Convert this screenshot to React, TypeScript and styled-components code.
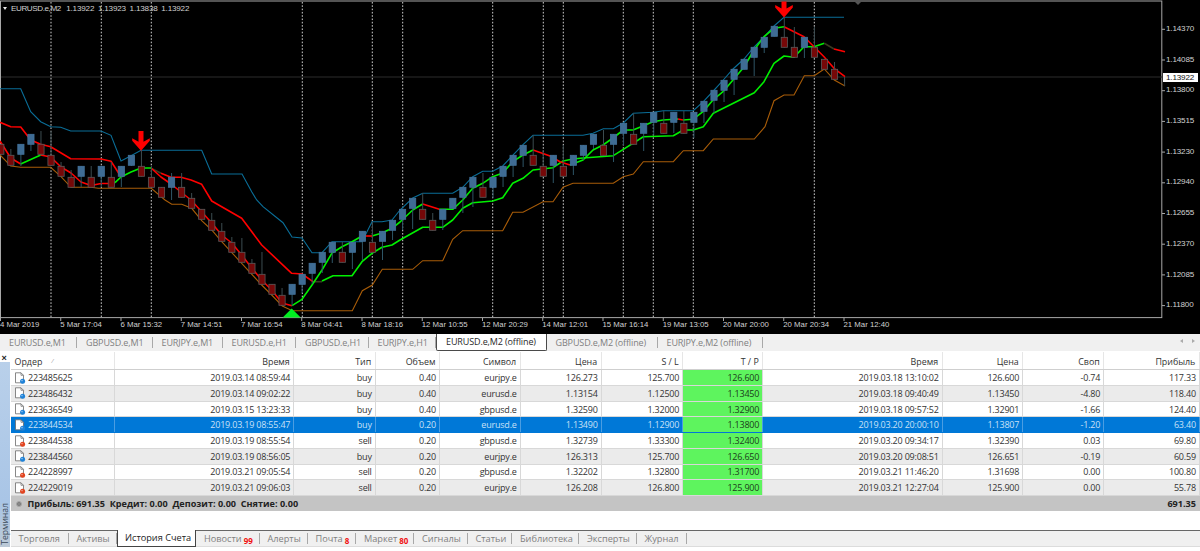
import React from "react";
import styled, { createGlobalStyle } from "styled-components";

const Global = createGlobalStyle`
  html, body { margin: 0; padding: 0; background: #fff; }
  #root { width: 1200px; height: 551px; overflow: hidden; }
  * { box-sizing: border-box; }
`;

const UI_FONT = `"Open Sans", "Noto Sans", sans-serif`;
const CHART_FONT = `"Liberation Sans", Arial, sans-serif`;

/* ---------- chart data ---------- */
type C = [number, 0 | 1, number?, number?];
const candles: C[] = [
  [144,0],[155,0,149],[144,1,,166],[134,1,,151],[144,0,131],[155,0,131],[166,0,162],[177,0,170],[166,1,,187],[177,0,166],
  [166,1,,187],[177,0,162],[166,1,,187],[155,1,,166],[166,0,150],[177,0,166],[187,0],[177,1,173,200],[187,0,173],[198,0,193],
  [209,0],[220,0,213],[231,0,223],[242,0,237],[252,0,238],[263,0,259],[274,0,252],[284,0],[295,0,288],[284,1,,306],
  [274,1,,293],[263,1,,284],[252,1,,273],[242,1,,263],[252,0,242],[242,1,,269],[231,1,,260],[242,0,222],[231,1,,260],[220,1,,240],
  [209,1,,230],[198,1,,229],[209,0,193],[220,0,213],[209,1,,230],[198,1],[187,1,,213],[177,1,,207],[187,0,173],[177,1,,198],
  [166,1,,187],[155,1,,177],[145,1,,167],[155,0,135],[166,0,150],[155,1,,183],[166,0,145],[155,1,,175],[145,1,,160],[134,1,,149],
  [145,0,130],[134,1,,162],[123,1,,145],[134,0,113],[123,1,,151],[112,1,,135],[123,0,111],[112,1,,133],[123,0,111],[112,1,,138],
  [101,1,,123],[90,1,,113],[80,1,,102],[69,1,,95],[59,1],[47,1,,76],[37,1,,53],[26,1],[37,0,17],[47,0,27],
  [37,1,,58],[47,0,27],[59,0],[69,0,62],
];
const cx = (i: number) => 0.8 + 10.045 * i;

const blueLine = "0,88.7 20.7,88.7 30.7,111.7 40.7,121.7 50.7,126.7 60.7,127.3 70.7,131 101,131 111,135.3 121,161 131,155.7 141,150.3 201.7,150.3 211.7,174 242,174 251.7,191.7 256.7,200 263,206.7 283,222.7 292,237 302,238 312,252.7 322,252.7 332,241.7 362,241.7 372,221.7 382,221.7 392,220 400,210 412.7,198 422.7,193.3 452.7,193.3 462.7,187.3 472.7,176.7 482.7,171.3 492.7,171.3 502.7,166 512.7,155.3 523,144.7 533,135.3 583,135.3 593,133.3 603.3,128.7 613.3,128.7 623.3,123 633.3,113.3 653.3,112.3 663.3,110.7 693.3,110.7 703.3,101.7 713.3,91 723.3,80 733,69 744,59 754,47 764,37 774,26 784,17.3 844,17.3";
const brownLine = "0,155 10.7,166 20.7,167.3 50.7,167.3 61,176.7 71,187.3 91,187.3 98.3,188.3 151.3,188.3 165,200 171.7,204.3 181.7,204.3 191.7,208.3 201.7,220.7 211.7,230 221.7,241.7 241.7,263.3 261.7,285 271.7,295 282.3,306 292.3,310.7 352.3,310.7 362.3,290.7 372.3,285 382.3,269.3 412.7,269.3 422.7,260.7 442.7,260.7 452.7,239.3 462.7,230.7 502.7,230.7 512.7,212.3 523,212.3 543,201.7 553,201.7 563,187.3 573,183.3 613.3,183.3 623.3,176.7 633.3,174 643.3,161.7 673.3,161.7 683.3,150.7 703.3,150.7 713.3,139 754.3,139 765,126.7 774,100.7 784,95 794,95 804.3,75.7 814.3,75.7 824.3,69 834.3,80 845,86";
const colored: [string, string][] = [
  ["#ff0000", "0,122.3 10.7,126.7 20.7,127 30.7,140 40.7,144.3 50.7,146.7 60.7,152.7 70.7,158.7 101,159 111,161.3 121,176.7"],
  ["#ff0000", "161,173.3 171,177.3 181,177.3 191,180 201.7,184.3 211.7,201 241.7,218.3 261.7,245 291.7,273.3 302,274 313,281.7"],
  ["#3a3a20", "151,168.3 161,173.3"],
  ["#3a3a20", "313,281.7 322,281.7"],
  ["#00f000", "322,281 333,275.7 352,275.7 362,261.7 372,253.3 382,247.3 392,245 400,240 422.7,227.3 442.7,227.3 452.7,220 462.7,208.3 472.7,202.7 492.7,201 502.7,197.7 512.7,183.3 523,178.3 533,170 553,167.7 563,161 573,159 583,158 613.3,155.7 623.3,149.3 643.3,136.7 673.3,135.7 683.3,130 693.3,130 703.3,126.7 713.3,113.3 754.3,92.7 764,81.7 774,63.3 784,56 794,57.3 804,46.7 814,46.7 824.3,43.3"],
  ["#3a3a20", "824.3,43.3 834,49"],
  ["#ff0000", "834,49 845,51.7"],
  ["#ff0000", "0,141 10.7,158 20.7,164"],
  ["#00f000", "20.7,164 40.7,155"],
  ["#ff0000", "40.7,155 50.7,157 61,167 71,173 81,182 91,185.5 101,183.5 111,183.5 115,182.7"],
  ["#00f000", "115,182.7 121,177 131,172 141,168 151,168"],
  ["#ff0000", "151,168 161,177 171,184 181,192 191,200 201,211 211.7,223 221.7,235 231.7,243 241.7,255 251.7,268 261.7,280 271.7,290 282,303 292,305.7"],
  ["#00f000", "292,305.7 302,299.3 312,285 322,270 332,253 342,246.7 352,241.7 362,236"],
  ["#ff0000", "362,236 372,236"],
  ["#00f000", "372,236 382,233 392,228.3 400,222 412.7,210 422.7,204"],
  ["#ff0000", "422.7,204 439.3,209.3"],
  ["#00f000", "439.3,209.3 452.7,209.3 462.7,200 472.7,188.3 482.7,183.3 492.7,176.7 502.7,173 512.7,161.7 523,155 533,150"],
  ["#ff0000", "533,150 550,156 560,161.7 570,165"],
  ["#00f000", "570,165 583,160 593,150 603,145 613,138 623.3,130 633,130 643,126 653,121.7 663,120 678,119"],
  ["#ff0000", "678,119 683,120"],
  ["#00f000", "683,120 693,119.3 703,111.7 713,100 723,91.7 733,80 744,67 754,50 764,36.7 774,28.3 784,26.7"],
  ["#ff0000", "784,26.7 804,36.7 814,46.7 824,56.7 834,68.3 845,76.7"],
];
const dotted = [51, 101.3, 151.3, 302.3, 372.3, 402.7, 492.7, 543.3, 563.3, 623.3, 653.3, 693.3, 814.3];
const prices = ["1.14370","1.14085","1.13800","1.13515","1.13230","1.12940","1.12655","1.12370","1.12085","1.11800"];
const times = ["4 Mar 2019","5 Mar 17:04","6 Mar 15:32","7 Mar 14:51","7 Mar 16:54","8 Mar 04:41","8 Mar 18:16","12 Mar 10:55","12 Mar 20:29","14 Mar 12:01","15 Mar 16:14","19 Mar 13:05","20 Mar 20:00","20 Mar 20:34","21 Mar 12:40"];

/* ---------- table data ---------- */
const headers = ["Ордер","Время","Тип","Объем","Символ","Цена","S / L","T / P","Время","Цена","Своп","Прибыль"];
const rows: string[][] = [
  ["223485625","2019.03.14 08:59:44","buy","0.40","eurjpy.e","126.273","125.700","126.600","2019.03.18 13:10:02","126.600","-0.74","117.33"],
  ["223486432","2019.03.14 09:02:22","buy","0.40","eurusd.e","1.13154","1.12500","1.13450","2019.03.18 09:40:49","1.13450","-4.80","118.40"],
  ["223636549","2019.03.15 13:23:33","buy","0.40","gbpusd.e","1.32590","1.32000","1.32900","2019.03.18 09:57:52","1.32901","-1.66","124.40"],
  ["223844534","2019.03.19 08:55:47","buy","0.20","eurusd.e","1.13490","1.12900","1.13800","2019.03.20 20:00:10","1.13807","-1.20","63.40"],
  ["223844538","2019.03.19 08:55:54","sell","0.20","gbpusd.e","1.32739","1.33300","1.32400","2019.03.20 09:34:17","1.32390","0.03","69.80"],
  ["223844560","2019.03.19 08:56:05","buy","0.20","eurjpy.e","126.313","125.700","126.650","2019.03.20 09:08:51","126.651","-0.19","60.59"],
  ["224228997","2019.03.21 09:05:54","sell","0.20","gbpusd.e","1.32202","1.32800","1.31700","2019.03.21 11:46:20","1.31698","0.00","100.80"],
  ["224229019","2019.03.21 09:06:03","sell","0.20","eurjpy.e","126.208","126.800","125.900","2019.03.21 12:27:04","125.900","0.00","55.78"],
];
const chartTabs: [string, number, boolean?][] = [
  ["EURUSD.e,M1", 77],["GBPUSD.e,M1", 75.5],["EURJPY.e,M1", 70],["EURUSD.e,H1", 73.5],["GBPUSD.e,H1", 72.5],["EURJPY.e,H1", 67.5],
  ["EURUSD.e,M2 (offline)", 110.5, true],["GBPUSD.e,M2 (offline)", 111],["EURJPY.e,M2 (offline)", 105],
];
const termTabs: [string, number, string?, boolean?][] = [
  ["Торговля", 58],["Активы", 48.5],["История Счета", 79, undefined, true],["Новости", 63.5, "99"],["Алерты", 48],["Почта", 48.5, "8"],
  ["Маркет", 58, "80"],["Сигналы", 53.5],["Статьи", 44.5],["Библиотека", 67],["Эксперты", 57.5],["Журнал", 50],
];

/* ---------- styled ---------- */
const Page = styled.div`
  width: 1200px; height: 551px; display: flex; flex-direction: column; background: #fff; font-family: ${UI_FONT};
`;
const ChartArea = styled.div`
  position: relative; height: 334px; flex: none; background: #000; overflow: hidden; font-family: ${CHART_FONT};
`;
const ChartSvg = styled.svg`
  display: block; width: 1200px; height: 334px;
`;
const ChartTitle = styled.div`
  position: absolute; left: 3px; top: 3px; display: flex; align-items: center; height: 10px; color: #d0d0d0; font-size: 8.1px; letter-spacing: -0.17px; white-space: pre;
`;
const TitleMark = styled.span`
  width: 0; height: 0; margin-right: 4px; border-left: 2.5px solid transparent; border-right: 2.5px solid transparent; border-top: 3px solid #e8e8e8;
`;
const TitleName = styled.span`
  letter-spacing: -0.42px;
`;
const TitleValues = styled.span`
  display: flex; gap: 3.6px; margin-left: 5.4px;
`;
const PriceAxis = styled.div`
  position: absolute; left: 1166px; top: 14px; display: flex; flex-direction: column;
`;
const PriceLabel = styled.span`
  height: 30.7px; line-height: 30.7px; font-size: 8.1px; letter-spacing: -0.17px; color: #d0d0d0;
`;
const PriceTag = styled.span`
  position: absolute; left: 1162.5px; top: 73px; width: 35px; height: 9px; line-height: 9px; padding-left: 3.5px; background: #fff; color: #111; font-size: 8.1px; letter-spacing: -0.17px;
`;
const TimeAxis = styled.div`
  position: absolute; left: 0; top: 320.4px; display: flex;
`;
const TimeLabel = styled.span`
  width: 60.25px; flex: none; font-size: 7.8px; line-height: 10px; color: #d0d0d0; white-space: nowrap;
`;
const TabStrip = styled.div`
  height: 16.5px; flex: none; display: flex; align-items: stretch; background: #f0f0f0; position: relative; padding-left: 0;
`;
const ChartTab = styled.div<{ $w: number; $active?: boolean }>`
  width: ${(p) => p.$w}px; flex: none; display: flex; align-items: center; white-space: nowrap;
  padding-left: 9px; font-size: 9px; letter-spacing: -0.12px;
  color: ${(p) => (p.$active ? "#2a2a2a" : "#808080")};
  background: ${(p) => (p.$active ? "#fff" : "transparent")};
  border-right: 1px solid ${(p) => (p.$active ? "#4a4a4a" : "#a8a8a8")};
  border-left: ${(p) => (p.$active ? "1px solid #4a4a4a" : "0")};
  border-bottom: ${(p) => (p.$active ? "1px solid #4a4a4a" : "0")};
  margin-top: ${(p) => (p.$active ? "0" : "3px")};
  margin-bottom: ${(p) => (p.$active ? "0" : "3px")};
  border-radius: ${(p) => (p.$active ? "0 0 2px 2px" : "0")};
`;
const Arrows = styled.div`
  position: absolute; right: 5px; top: 5px; display: flex; gap: 9px;
`;
const TabArrow = styled.span<{ $dir: "l" | "r" }>`
  width: 0; height: 0; border-top: 2.5px solid transparent; border-bottom: 2.5px solid transparent;
  ${(p) => (p.$dir === "l" ? "border-right: 3px solid #aaa;" : "border-left: 3px solid #aaa;")}
`;
const Terminal = styled.div`
  flex: 1; display: grid; grid-template-columns: 10.5px 1fr; padding-top: 1.5px; min-height: 0;
`;
const Sidebar = styled.div`
  display: flex; flex-direction: column; height: 195px;
`;
const CloseBox = styled.div`
  height: 10px; flex: none; display: flex; align-items: center; justify-content: center; font: 700 9px/10px ${CHART_FONT}; color: #222; background: #fff; padding: 1px 2px 0 0;
`;
const SideBody = styled.div`
  flex: 1; display: flex; flex-direction: column; justify-content: flex-end; align-items: center; width: 10px;
  background: linear-gradient(#b9d0ea, #a9c5e6 75%, #bcc9d6);
`;
const SideLabel = styled.span`
  writing-mode: vertical-rl; transform: rotate(180deg); font-size: 8.6px; color: #3a4a5a; line-height: 10px; padding: 2px 0 0;
`;
const Main = styled.div`
  display: flex; flex-direction: column; min-width: 0;
`;
const COLS = "104.8px 179px 81.4px 64.3px 80.7px 81px 81.6px 80px 179.4px 80.6px 81px 95.6px";
const HeaderRow = styled.div`
  display: grid; grid-template-columns: ${COLS}; height: 18.3px; border-bottom: 1px solid #cfcfcf; background: #fff; color: #333;
`;
const HeaderCell = styled.div<{ $left?: boolean }>`
  display: flex; align-items: center; gap: 10px; justify-content: ${(p) => (p.$left ? "flex-start" : "flex-end")};
  padding: 1px ${(p) => (p.$left ? 0 : 3.5)}px 0 ${(p) => (p.$left ? 4 : 0)}px; font-size: 8.9px; border-right: 1px solid #e6e6e6; white-space: nowrap;
`;
const SortMark = styled.span`
  font-size: 6px; color: #888;
`;
const DataRow = styled.div<{ $i: number; $sel: boolean }>`
  display: grid; grid-template-columns: ${COLS}; height: 15.72px;
  background: ${(p) => (p.$sel ? "#0078d7" : p.$i % 2 ? "#ebebeb" : "#fff")};
  color: ${(p) => (p.$sel ? "#c9e0f6" : "#333")};
  border-bottom: 1px solid ${(p) => (p.$sel ? "#0078d7" : "#d8d8d8")};
`;
const Cell = styled.div<{ $sel: boolean; $tp?: boolean; $left?: boolean }>`
  display: flex; align-items: center; justify-content: ${(p) => (p.$left ? "flex-start" : "flex-end")};
  padding: 0 ${(p) => (p.$left ? 0 : 3)}px 0 ${(p) => (p.$left ? 3 : 0)}px; font-size: 9px; letter-spacing: -0.2px; white-space: nowrap; min-width: 0;
  border-right: 1px solid ${(p) => (p.$sel ? "#4a9de2" : "#d8d8d8")};
  ${(p) => (p.$tp ? "background: #5ef45e; color: #1c3c1c;" : "")}
`;
const OrderIcon = styled.svg`
  width: 12px; height: 12px; flex: none; margin-right: 2.5px;
`;
const Summary = styled.div`
  height: 15px; flex: none; display: flex; align-items: center; justify-content: space-between; background: #c4c4c4; padding: 0 4px 0 5px; font-size: 9.1px; font-weight: 700; color: #222;
`;
const SummaryLeft = styled.div`
  display: flex; align-items: center; gap: 6px; white-space: pre;
`;
const StatusDot = styled.span`
  width: 6px; height: 6px; border-radius: 50%; background: #8c8c8c; border: 1.5px solid #a6a6a6; box-shadow: inset 0 0 0 1px #777;
`;
const Blank = styled.div`
  height: 19px; flex: none; background: #fff;
`;
const TermTabs = styled.div`
  height: 17px; flex: none; display: flex; background: #f0f0f0; border-top: 1px solid #666; border-bottom: 1px solid #dcdcdc;
`;
const TermTab = styled.div<{ $w: number; $active?: boolean }>`
  width: ${(p) => p.$w}px; flex: none; display: flex; align-items: center; white-space: nowrap; padding: 0 0 1px 8px; font-size: 9.2px;
  color: ${(p) => (p.$active ? "#222" : "#808080")};
  ${(p) =>
    p.$active
      ? `background: #fff; margin-top: -1px; margin-bottom: -1px; border: 1px solid #444; border-top: 0; padding-left: 7px; padding-bottom: 1px;`
      : `margin-top: 2px; margin-bottom: 2px; border-right: 1px solid #a8a8a8;`}
`;
const Badge = styled.span`
  color: #f01010; font-size: 8px; font-weight: 700; margin: 5px 0 0 2px; line-height: 8px;
`;

const DocIcon = ({ sell }: { sell: boolean }) => (
  <OrderIcon viewBox="0 0 12 12">
    <path d="M1.5.8h5.5l2.5 2.5v7.5h-8z" fill="#fff" stroke="#6a6a6a" strokeWidth="0.8" />
    <path d="M7 .8v2.5h2.5" fill="none" stroke="#6a6a6a" strokeWidth="0.7" />
    <circle cx="8.6" cy="9.3" r="2.5" fill={sell ? "#e2431e" : "#1e82d8"} />
    <circle cx="8" cy="8.6" r="0.8" fill="#fff" opacity="0.5" />
  </OrderIcon>
);

const downArrow = (c: number, top: number, apex: number) => {
  const j = apex - 9;
  const t = apex - 12.5;
  const e = apex - 10;
  return `${c - 2.5},${top} ${c + 2.5},${top} ${c + 2.5},${j} ${c + 8.8},${t} ${c + 8.8},${e} ${c},${apex} ${c - 8.8},${e} ${c - 8.8},${t} ${c - 2.5},${j}`;
};

export default function App() {
  return (
    <Page>
      <Global />
      <ChartArea>
        <ChartSvg viewBox="0 0 1200 334">
          <rect x="0.5" y="1" width="1161.3" height="316.6" fill="none" stroke="#a8a8a8" strokeWidth="1" />
          <line x1="1" y1="77" x2="1162" y2="77" stroke="#2c2c2c" strokeWidth="1" />
          {dotted.map((x) => (
            <line key={x} x1={x} y1="2" x2={x} y2="317" stroke="#d0d0d0" strokeWidth="1" strokeDasharray="1.6 1.7" />
          ))}
          <polygon points="855,2 861,2 858,5" fill="#555" />
          {prices.map((_, i) => (
            <line key={i} x1="1162" x2="1165" y1={29.3 + i * 30.7} y2={29.3 + i * 30.7} stroke="#a8a8a8" />
          ))}
          {times.map((_, i) => (
            <line key={i} x1={0.5 + i * 60.25} x2={0.5 + i * 60.25} y1="318" y2="321" stroke="#a8a8a8" />
          ))}
          <polyline points={blueLine} fill="none" stroke="#0a6e98" strokeWidth="1.1" />
          <polyline points={brownLine} fill="none" stroke="#a85c08" strokeWidth="1.1" />
          {colored.map(([c, pts], i) => (
            <polyline key={i} points={pts} fill="none" stroke={c} strokeWidth="1.6" strokeLinejoin="round" />
          ))}
          {candles.map(([top, up, wt, wb], i) => {
            const x = cx(i);
            return (
              <g key={i}>
                <line x1={x} x2={x} y1={wt ?? top} y2={wb ?? top + 10.5} stroke={up ? "#2e5566" : "#3c4c50"} strokeWidth="1" />
                <rect x={x - 3.1} y={top + 0.3} width="6.2" height="10" fill={up ? "#3f6c94" : "#760808"} stroke={up ? "#44739c" : "#5a5a5a"} strokeWidth="0.8" />
              </g>
            );
          })}
          <line x1="844.6" x2="844.6" y1="77" y2="86" stroke="#3c4c50" />
          <polygon points={downArrow(141, 131, 150.8)} fill="#ff0000" />
          <polygon points={downArrow(784, 1.5, 17.5)} fill="#ff0000" />
          <polygon points="291.7,308.5 300.7,317.5 282.7,317.5" fill="#00f020" />
        </ChartSvg>
        <ChartTitle>
          <TitleMark />
          <TitleName>EURUSD.e,M2</TitleName>
          <TitleValues>
            <span>1.13922</span>
            <span>1.13923</span>
            <span>1.13838</span>
            <span>1.13922</span>
          </TitleValues>
        </ChartTitle>
        <PriceAxis>
          {prices.map((p) => (
            <PriceLabel key={p}>{p}</PriceLabel>
          ))}
        </PriceAxis>
        <PriceTag>1.13922</PriceTag>
        <TimeAxis>
          {times.map((t) => (
            <TimeLabel key={t}>{t}</TimeLabel>
          ))}
        </TimeAxis>
      </ChartArea>
      <TabStrip>
        {chartTabs.map(([t, w, a]) => (
          <ChartTab key={t} $w={w} $active={a}>
            {t}
          </ChartTab>
        ))}
        <Arrows>
          <TabArrow $dir="l" />
          <TabArrow $dir="r" />
        </Arrows>
      </TabStrip>
      <Terminal>
        <Sidebar>
          <CloseBox>×</CloseBox>
          <SideBody>
            <SideLabel>Терминал</SideLabel>
          </SideBody>
        </Sidebar>
        <Main>
          <HeaderRow>
            {headers.map((h, i) => (
              <HeaderCell key={i} $left={i === 0}>
                {h}
                {i === 0 && <SortMark>⁄</SortMark>}
              </HeaderCell>
            ))}
          </HeaderRow>
          {rows.map((r, ri) => (
            <DataRow key={r[0]} $i={ri} $sel={ri === 3}>
              {r.map((v, ci) => (
                <Cell key={ci} $sel={ri === 3} $tp={ci === 7} $left={ci === 0}>
                  {ci === 0 && <DocIcon sell={r[2] === "sell"} />}
                  {v}
                </Cell>
              ))}
            </DataRow>
          ))}
          <Summary>
            <SummaryLeft>
              <StatusDot />
              Прибыль: 691.35  Кредит: 0.00  Депозит: 0.00  Снятие: 0.00
            </SummaryLeft>
            <span>691.35</span>
          </Summary>
          <Blank />
          <TermTabs>
            {termTabs.map(([t, w, b, a]) => (
              <TermTab key={t} $w={w} $active={a}>
                {t}
                {b && <Badge>{b}</Badge>}
              </TermTab>
            ))}
          </TermTabs>
        </Main>
      </Terminal>
    </Page>
  );
}
